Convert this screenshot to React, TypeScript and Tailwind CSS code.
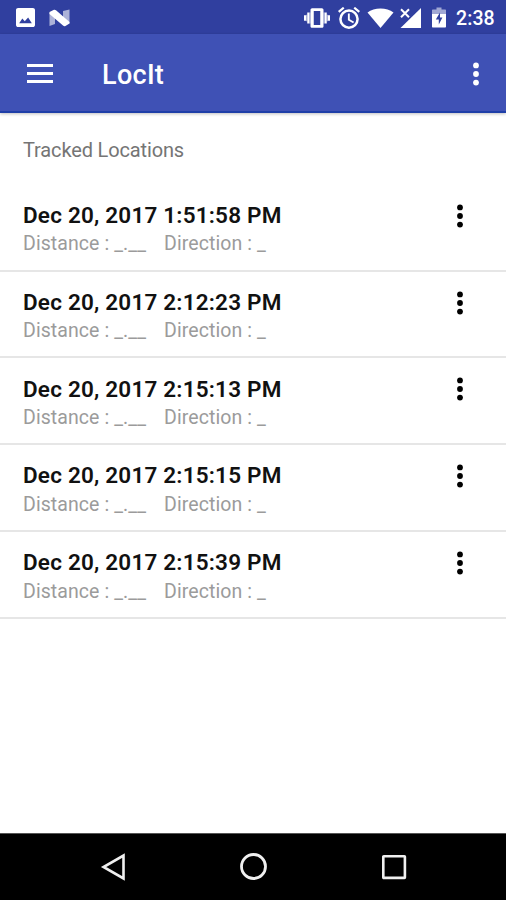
// App.tsx
import React from 'react';

interface TrackedLocation {
  id: number;
  date: string;
  distance: string;
  direction: string;
}

const locations: TrackedLocation[] = [
  { id: 1, date: 'Dec 20, 2017 1:51:58 PM', distance: '_.__', direction: '_' },
  { id: 2, date: 'Dec 20, 2017 2:12:23 PM', distance: '_.__', direction: '_' },
  { id: 3, date: 'Dec 20, 2017 2:15:13 PM', distance: '_.__', direction: '_' },
  { id: 4, date: 'Dec 20, 2017 2:15:15 PM', distance: '_.__', direction: '_' },
  { id: 5, date: 'Dec 20, 2017 2:15:39 PM', distance: '_.__', direction: '_' },
];

const MoreIcon: React.FC = () => (
  <svg width="8" height="24" viewBox="0 0 8 24" fill="currentColor">
    <circle cx="4" cy="3.4" r="2.9" />
    <circle cx="4" cy="12" r="2.9" />
    <circle cx="4" cy="20.6" r="2.9" />
  </svg>
);

const StatusBar: React.FC = () => (
  <div className="h-[34px] shrink-0 flex items-center bg-[#303f9f] text-white pl-4 pr-[11px] pt-px">
    <svg width="19" height="19" viewBox="3 3 18 18" fill="currentColor">
      <path d="M21 19V5c0-1.1-.9-2-2-2H5c-1.1 0-2 .9-2 2v14c0 1.1.9 2 2 2h14c1.1 0 2-.9 2-2zM9 13l2.3 2.5L14.5 12l3.5 5.5H6L9 13z" />
    </svg>
    <svg className="ml-[14px]" width="21" height="18" viewBox="0 0 21 18" fill="currentColor">
      <path d="M0.5 3.5L6 7v8L0.5 17zM20.5 0.5v14L14 9V2z" opacity="0.6" />
      <path d="M0.5 3L5 0.8Q6 0.5 7 1.3L20.5 13v1.5L16 17.2Q15 17.5 14 16.5L0.5 5z" />
    </svg>

    <svg className="ml-auto" width="26" height="22" viewBox="0 2 24 20" fill="currentColor">
      <path d="M0 9.500h2v5H0zM3 7h2v10H3zM22 9.500h2v5h-2zM19 7h2v10h-2z" />
      <path d="M2 9h1v6H2zM5 7h1v10H5zM18 7h1v10h-1zM21 9h1v6h-1z" opacity="0.6" />
      <path d="M16.5 3h-9C6.67 3 6 3.67 6 4.5v15c0 .83.67 1.5 1.5 1.5h9c.83 0 1.5-.67 1.5-1.5v-15c0-.83-.67-1.5-1.5-1.5zM15 18.5H9V5.5h6v13z" />
    </svg>
    <svg className="ml-[8px]" width="22" height="22" viewBox="2 2 20 20" fill="currentColor">
      <path d="M22 5.72l-4.6-3.86-1.29 1.53 4.6 3.86L22 5.72zM7.88 3.39L6.6 1.86 2 5.71l1.29 1.53 4.59-3.85z" />
      <path d="M12.7 8H11v6l4.75 2.85.85-1.4-3.9-2.3V8z" />
      <circle cx="12" cy="13" r="7.8" fill="none" stroke="currentColor" strokeWidth="2.3" />
    </svg>
    <svg className="ml-[7px]" width="27" height="20" viewBox="0 0 27 20" fill="currentColor">
      <path d="M13.5 20L0.5 4.5C4 1.8 8.5 0.5 13.5 0.5S23 1.8 26.5 4.5z" />
    </svg>
    <svg className="ml-[6px]" width="21" height="20" viewBox="0 0 21 20" fill="currentColor">
      <path d="M21 0v20H0.5z" />
      <path d="M0 0h11v9.500H7L0 10z" fill="#303f9f" />
      <path d="M1 1.200l8 8M9 1.200l-8 8" stroke="currentColor" strokeWidth="2" />
    </svg>
    <svg className="ml-[11px]" width="14" height="21" viewBox="0 0 14 21" fill="currentColor">
      <path d="M4.5 0.5h5v2H13c.6 0 1 .4 1 1V8H0V3.5c0-.6.4-1 1-1h3.5z" opacity="0.55" />
      <path d="M0 7h14v12.5c0 .6-.4 1-1 1H1c-.6 0-1-.4-1-1z" />
      <path d="M8 5.5L3.8 12.5h3v5l3.600-7H8z" fill="#303f9f" />
    </svg>
    <span className="ml-[10px] w-[39px] pt-[2px] whitespace-nowrap text-[19.5px] leading-none font-medium tracking-[0.1px]">2:38</span>
  </div>
);

const Toolbar: React.FC = () => (
  <header className="h-[79px] shrink-0 flex items-center bg-[#3f51b5] text-white pl-[27px] pr-[26px] border-b-2 border-[#1f3fa8] shadow-[0_1px_3px_rgba(0,0,0,0.25)]">
    <button className="flex flex-col gap-[5px] pt-px" aria-label="Open menu">
      <span className="block w-[26px] h-[3px] bg-white" />
      <span className="block w-[26px] h-[3px] bg-white" />
      <span className="block w-[26px] h-[3px] bg-white" />
    </button>
    <h1 className="ml-[49px] pt-[6px] text-[27px] leading-none font-medium tracking-[0.3px]">LocIt</h1>
    <button className="ml-auto pt-[2px]" aria-label="More options">
      <MoreIcon />
    </button>
  </header>
);

const LocationRow: React.FC<{ location: TrackedLocation }> = ({ location }) => (
  <li className="h-[86.8px] flex items-start justify-between border-b-2 border-[#e6e6e6] pl-[23px] pr-[42px]">
    <div>
      <p className="mt-[16.2px] text-[22.5px] leading-[28px] font-semibold tracking-[0.2px] text-[#111111] whitespace-nowrap">{location.date}</p>
      <p className="mt-[2.5px] flex gap-[18px] text-[19.5px] leading-[26px] tracking-[0.08px] text-[#9b9b9b] whitespace-nowrap">
        <span>Distance : {location.distance}</span>
        <span>Direction : {location.direction}</span>
      </p>
    </div>
    <button className="mt-[19px] text-black" aria-label="Location options">
      <MoreIcon />
    </button>
  </li>
);

const NavigationBar: React.FC = () => (
  <nav className="h-[67px] shrink-0 flex items-center justify-between bg-black text-[#f0f0f0] border-t border-[#555555] pl-[100px] pr-[99px]">
    <svg width="26" height="28" viewBox="0 0 26 28" fill="none" stroke="currentColor" strokeWidth="2.6">
      <path d="M23.5 2.5v23L3.5 14z" />
    </svg>
    <svg width="28" height="28" viewBox="0 0 28 28" fill="none" stroke="currentColor" strokeWidth="2.8">
      <circle cx="13.5" cy="13.5" r="12" />
    </svg>
    <svg width="26" height="26" viewBox="0 0 26 26" fill="none" stroke="currentColor" strokeWidth="2.6">
      <rect x="2.3" y="2.3" width="21.6" height="21.6" rx="0.5" />
    </svg>
  </nav>
);

const App: React.FC = () => (
  <div className="w-[506px] h-[900px] flex flex-col overflow-hidden bg-white font-[Roboto,sans-serif]">
    <StatusBar />
    <Toolbar />
    <main className="flex-1 min-h-0">
      <h2 className="h-[71.8px] pt-[24px] pl-[23px] text-[20px] leading-[26px] tracking-[-0.14px] text-[#757575]">Tracked Locations</h2>
      <ul>
        {locations.map((location) => (
          <LocationRow key={location.id} location={location} />
        ))}
      </ul>
    </main>
    <NavigationBar />
  </div>
);

export default App;
